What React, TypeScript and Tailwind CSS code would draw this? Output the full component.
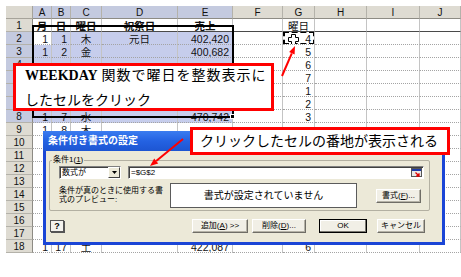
import React from 'react';

type RowData = {
  n: number;
  a?: string;
  b?: string;
  c?: string;
  d?: string;
  e?: string;
  g?: string;
};

const COLS = ['A', 'B', 'C', 'D', 'E', 'F', 'G', 'H', 'I', 'J'];

// only the cells that show around the callouts and the dialog
const ROWS: RowData[] = [
  { n: 1, a: '月', b: '日', c: '曜日', d: '祝祭日', e: '売上', g: '曜日' },
  { n: 2, a: '1', b: '1', c: '木', d: '元日', e: '402,420', g: '4' },
  { n: 3, a: '1', b: '2', c: '金', e: '400,682', g: '5' },
  { n: 4, g: '6' },
  { n: 5, g: '7' },
  { n: 6, g: '1' },
  { n: 7, g: '2' },
  { n: 8, a: '1', b: '7', c: '水', e: '470,742', g: '3' },
  { n: 9, a: '1', b: '8', c: '木' },
  { n: 10 },
  { n: 11 },
  { n: 12 },
  { n: 13 },
  { n: 14 },
  { n: 15 },
  { n: 16 },
  { n: 17 },
  { n: 18, a: '1', b: '17', c: '土', e: '422,087', g: '6' },
];

function cellValue(r: RowData, col: number): string | undefined {
  return [r.a, r.b, r.c, r.d, r.e, undefined, r.g][col];
}

const Cell: React.FC<{ row: number; col: number; value?: string }> = ({ row, col, value }) => {
  const selected = row >= 2 && row <= 8 && col <= 4 && !(row === 2 && col === 0);
  const head = row === 1;
  const center = head || col === 2 || col === 3;
  const antsCell = row === 2 && col === 6;

  return (
    <div
      className={`relative h-[13px] flex items-end overflow-hidden whitespace-nowrap border-r border-b border-dotted [border-right-style:solid] border-r-[#c4c4c4] text-[10.5px] leading-[10px] ${
        head ? 'border-b-[#4a4a4a] [border-bottom-style:solid]' : 'border-b-[#a4a4a4]'
      } ${selected ? 'bg-[#c6cdec]' : 'bg-white'} ${center ? 'justify-center' : 'justify-end pr-[3px]'} ${
        head && col <= 4 ? 'font-bold underline underline-offset-[1px]' : ''
      }`}
    >
      {value}
      {antsCell && (
        <>
          <div className="absolute left-0 top-[-1px] right-[-1px] bottom-[-1px] border-2 border-dashed border-black" />
          <svg className="absolute left-[5px] top-[2px]" width="11" height="11" viewBox="0 0 11 11">
            <path d="M3.5 0.5h4v3h3v4h-3v3h-4v-3h-3v-4h3z" fill="#fff" stroke="#000" />
          </svg>
        </>
      )}
    </div>
  );
};

function Sheet() {
  return (
    <div className="relative ml-[6px] pt-[6px] h-[253px] overflow-hidden">
      <div className="grid grid-cols-[27px_19px_19px_31px_76px_55px_50px_32px_52px_53px_1fr] text-[#111]">
        <div className="h-[13px] bg-[#dcd9d0] border-r border-b border-[#a6a39a]" />
        {COLS.map((c, i) => (
          <div
            key={c}
            className={`h-[13px] flex items-center justify-center text-[10px] border-r border-b border-r-[#b4b2aa] border-b-[#8d8b84] ${
              i < 5 ? 'bg-[#c4cadf]' : 'bg-[#dedbd2]'
            }`}
          >
            {c}
          </div>
        ))}
        {ROWS.map((r) => (
          <React.Fragment key={r.n}>
            <div
              className={`h-[13px] flex items-center justify-center text-[10px] border-r border-b border-r-[#8d8b84] border-b-[#b4b2aa] ${
                r.n >= 2 && r.n <= 8 ? 'bg-[#c4cadf]' : 'bg-[#dedbd2]'
              }`}
            >
              {r.n}
            </div>
            {COLS.map((c, i) => (
              <Cell key={c} row={r.n} col={i} value={cellValue(r, i)} />
            ))}
          </React.Fragment>
        ))}
      </div>
      <div className="absolute left-[26px] top-[25px] w-[202px] h-[93px] border-2 border-black pointer-events-none" />
      <div className="absolute left-[224px] top-[114px] w-[5px] h-[5px] bg-black border border-white" />
    </div>
  );
}

const Btn: React.FC<{ w: string; children: React.ReactNode; def?: boolean }> = ({ w, children, def }) => (
  <div
    className={`${w} h-[14px] flex items-center justify-center bg-[#f1efe6] border ${
      def
        ? 'border-black shadow-[inset_-1px_-1px_0_#7a7870,inset_1px_1px_0_#fff]'
        : 'border-t-white border-l-white border-r-[#6f6d66] border-b-[#6f6d66] shadow-[inset_-1px_-1px_0_#b5b2a6]'
    }`}
  >
    {children}
  </div>
);

function Dialog() {
  return (
    <div className="absolute left-[43px] top-[131px] w-[402px] h-[114px] flex flex-col border-x-[3px] border-b-[3px] border-[#1a45d6] bg-[#ece9d8] text-[8px] leading-[10px] text-black">
      <div className="-mx-[3px] h-[20px] shrink-0 flex items-center pl-[5px] bg-linear-to-b from-[#3b7cf0] via-[#2462e2] to-[#1d55d2] text-white font-bold text-[10px]">
        条件付き書式の設定
      </div>
      <div className="flex flex-col pl-[3px] pt-[9px]">
        <div className="relative w-[381px] h-[51px] border border-[#b3b0a2] rounded-[2px] pt-[5px] pl-[9px]">
          <span className="absolute -top-[6px] left-[2px] px-[1px] bg-[#ece9d8]">
            条件1(<span className="underline">1</span>)
          </span>
          <div className="flex gap-[7px]">
            <div className="w-[62px] h-[13px] flex items-center bg-white border border-t-[#808080] border-l-[#808080] border-r-white border-b-white shadow-[inset_1px_1px_0_#404040]">
              <span className="flex-1 pl-[2px]">数式が</span>
              <div className="w-[12px] h-[11px] flex items-center justify-center bg-[#ece9d8] border border-t-white border-l-white border-r-[#404040] border-b-[#404040]">
                <svg width="5" height="3" viewBox="0 0 5 3">
                  <path d="M0 0h5L2.5 3z" fill="#000" />
                </svg>
              </div>
            </div>
            <div className="w-[296px] h-[13px] flex items-center bg-white border border-t-[#808080] border-l-[#808080] border-r-white border-b-white shadow-[inset_1px_1px_0_#404040]">
              <span className="flex-1 pl-[2px]">=$G$2</span>
              <svg className="mr-[1px]" width="11" height="9" viewBox="0 0 11 9">
                <rect x="0.5" y="0.5" width="10" height="8" fill="#e8e8e8" stroke="#555" />
                <rect x="1" y="1" width="9" height="2" fill="#1c3aa8" />
                <path d="M4.5 4.5L8 8M8 5.2V8H5.2" stroke="#e00000" strokeWidth="1.3" fill="none" />
              </svg>
            </div>
          </div>
          <div className="flex mt-[4px]">
            <div className="w-[111px] pt-[3px] leading-[9px] whitespace-nowrap">
              条件が真のときに使用する書
              <br />
              式のプレビュー:
            </div>
            <div className="w-[187px] h-[25px] flex items-center justify-center bg-white border border-[#5b5b5b] text-[10px]">
              書式が設定されていません
            </div>
            <div className="ml-[19px] self-center">
              <Btn w="w-[45px]">
                書式(<span className="underline">F</span>)...
              </Btn>
            </div>
          </div>
        </div>
        <div className="mt-[8px] flex items-start justify-between pl-[1px] pr-[17px]">
          <div className="mt-[1px] w-[14px] h-[12px] flex items-center justify-center bg-[#f4f3ee] border border-[#555] shadow-[1px_1px_0_#555] font-bold text-[9px] [font-family:'Liberation_Sans',sans-serif]">
            ?
          </div>
          <div className="flex">
            <Btn w="w-[56px]">
              追加(<span className="underline">A</span>) &gt;&gt;
            </Btn>
            <div className="ml-[4px]">
              <Btn w="w-[54px]">
                削除(<span className="underline">D</span>)...
              </Btn>
            </div>
            <div className="ml-[13px]">
              <Btn w="w-[48px]" def>
                OK
              </Btn>
            </div>
            <div className="ml-[10px]">
              <Btn w="w-[48px]">キャンセル</Btn>
            </div>
          </div>
        </div>
      </div>
    </div>
  );
}

function Arrows() {
  return (
    <svg className="absolute inset-0 pointer-events-none" width="461" height="277" viewBox="0 0 461 277">
      <line x1="282" y1="76" x2="291.8" y2="53.3" stroke="#ff0000" strokeWidth="2" />
      <polygon points="295,46 294.6,54.5 289.1,52.1" fill="#ff0000" />
      <line x1="183" y1="139" x2="156.2" y2="160.9" stroke="#ff0000" strokeWidth="2" />
      <polygon points="150,166 158.2,163.4 154.2,158.4" fill="#ff0000" />
    </svg>
  );
}

export default function App() {
  return (
    <div className="relative w-[461px] h-[277px] overflow-hidden bg-white [font-family:'Liberation_Sans','Noto_Sans_CJK_JP',sans-serif]">
      <Sheet />
      <div className="absolute left-[13px] top-[63px] w-[261px] h-[48px] border-[3px] border-[#ff0000] bg-white pl-[9px] text-[14px] leading-[25px] text-black whitespace-nowrap">
        <div className="-mt-[3px]">
          <span className="[font-family:'Liberation_Serif',serif] font-bold">WEEKDAY</span>{' '}
          <span className="tracking-[1px]">関数で曜日を整数表示に</span>
        </div>
        <div>したセルをクリック</div>
      </div>
      <Dialog />
      <div className="absolute left-[190px] top-[127px] w-[260px] h-[28px] border-[3px] border-[#ff0000] bg-white pl-[7px] flex items-center text-[14px] text-black whitespace-nowrap">
        クリックしたセルの番地が表示される
      </div>
      <Arrows />
    </div>
  );
}
